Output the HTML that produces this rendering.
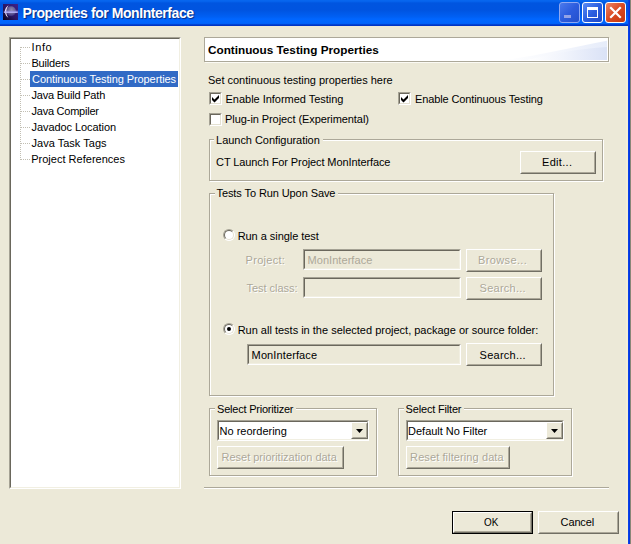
<!DOCTYPE html>
<html>
<head>
<meta charset="utf-8">
<title>Properties for MonInterface</title>
<style>
html,body{margin:0;padding:0;}
body{width:631px;height:544px;overflow:hidden;background:#ECE9D8;position:relative;
 font-family:"Liberation Sans",sans-serif;font-size:11px;color:#000;}
.a{position:absolute;}
.t{position:absolute;white-space:nowrap;line-height:14px;height:14px;}
.dis{color:#ACA899;}
.dl{color:#ACA899;text-shadow:1px 1px 0 #fff;}
.gl{background:#ECE9D8;box-shadow:-2px 0 0 #ECE9D8,3px 0 0 #ECE9D8;}
/* title bar */
#tbar{left:0;top:0;width:631px;height:26px;
 background:linear-gradient(to bottom,#0868F0 0px,#0562EC 1.5px,#0055E0 3px,#0054E0 10px,#0060F4 17px,#0066FF 19px,#0064FC 23.4px,#0048D8 24.3px,#0034C4 25.2px,#0034C4 26px);}
#title{top:4px;font-size:14px;font-weight:bold;color:#fff;line-height:18px;height:18px;
 text-shadow:1px 1px 1px #0A2A80;}
#rborder{left:628px;top:0;width:2px;height:544px;background:linear-gradient(to right,#0A44EC,#0032DC);box-shadow:1px 0 0 #8A8678;}
#rlight{left:626px;top:26px;width:2px;height:518px;background:#F2EDD9;}
/* sunken boxes */
.sunk{background:#fff;border:1px solid;border-color:#A5A294 #fff #fff #A5A294;box-sizing:border-box;}
.sunk:before{content:"";position:absolute;left:0;top:0;right:0;bottom:0;border:1px solid;border-color:#6A675C #F1EFE2 #F1EFE2 #6A675C;}
.fld{background:#ECE9D8;}
/* group boxes (etched) */
.grp{box-sizing:border-box;border:1px solid #ACA899;box-shadow:1px 1px 0 #fff,inset 1px 1px 0 #fff;}
/* buttons */
.btn{box-sizing:border-box;border:1px solid;border-color:#fff #716F64 #716F64 #fff;background:#ECE9D8;}
.btn:before{content:"";position:absolute;left:0;top:0;right:0;bottom:0;border:1px solid;border-color:#ECE9D8 #ACA899 #ACA899 #ECE9D8;}
/* check / radio */
.chk{width:13px;height:13px;box-sizing:border-box;background:#fff;border:1px solid;border-color:#A5A294 #fff #fff #A5A294;}
.chk:before{content:"";position:absolute;left:0;top:0;right:0;bottom:0;border:1px solid;border-color:#6A675C #E4E1D2 #E4E1D2 #6A675C;}
.rad{width:12px;height:12px;box-sizing:border-box;border-radius:50%;background:#fff;border:1px solid;border-color:#A5A294 #fff #fff #A5A294;}
.rad:before{content:"";position:absolute;left:0;top:0;right:0;bottom:0;border-radius:50%;border:1px solid;border-color:#6A675C #E4E1D2 #E4E1D2 #6A675C;}
.dot{width:4px;height:4px;border-radius:50%;background:#000;left:3px;top:3px;}
.tl{border-top:1px dotted #C2BFB3;height:0;width:9px !important;}
</style>
</head>
<body>
<!-- TITLE BAR -->
<div id="tbar" class="a"></div>
<div id="rlight" class="a"></div>
<div id="rborder" class="a"></div>
<svg class="a" style="left:3px;top:4px" width="15" height="16" viewBox="0 0 15 16">
 <defs><linearGradient id="ig" x1="1" y1="0" x2="0" y2="1"><stop offset="0" stop-color="#40228A"/><stop offset="0.55" stop-color="#2A1664"/><stop offset="1" stop-color="#06031C"/></linearGradient>
 <radialGradient id="gb" cx="0.55" cy="0.35" r="0.65"><stop offset="0" stop-color="#8E8AAE"/><stop offset="0.6" stop-color="#625A94"/><stop offset="1" stop-color="#34267A"/></radialGradient></defs>
 <rect x="0" y="0" width="15" height="16" fill="url(#ig)"/>
 <circle cx="8" cy="7.3" r="5" fill="url(#gb)"/>
 <path d="M5.6 1.6 C2.6 3 1.2 6.5 2.4 10 C3 11.8 4 13 5.4 13.8 C4 12 3.2 10 3.3 7.6 C3.4 5.2 4.2 3.2 5.6 1.6Z" fill="#F6EEFA"/>
 <rect x="0.8" y="6.8" width="14" height="0.9" fill="#A8A4F4"/>
 <rect x="0.8" y="8.0" width="14" height="0.9" fill="#B8B4FA"/>
</svg>
<!-- caption buttons -->
<div class="a" style="left:559px;top:2px;width:21px;height:21px;box-sizing:border-box;border:1px solid #8FA8F2;border-radius:3px;background:linear-gradient(135deg,#4C7AEC,#2C5CDE 50%,#2450CC)"></div>
<div class="a" style="left:564px;top:15px;width:7px;height:3px;background:#93A2E6"></div>
<div class="a" style="left:582px;top:2px;width:21px;height:21px;box-sizing:border-box;border:1px solid #fff;border-radius:3px;background:linear-gradient(135deg,#5C8CF5,#2C5FE0 50%,#1E48C8)"></div>
<div class="a" style="left:587px;top:7px;width:11px;height:11px;box-sizing:border-box;border:1px solid #fff;border-top:3px solid #fff"></div>
<div class="a" style="left:605px;top:2px;width:21px;height:21px;box-sizing:border-box;border:1px solid #fff;border-radius:3px;background:linear-gradient(135deg,#EC8668,#DA4A22 50%,#C4380E)"></div>
<svg class="a" style="left:605px;top:2px" width="21" height="21"><path d="M6 6 L15 15 M15 6 L6 15" stroke="#fff" stroke-width="2.2" stroke-linecap="square"/></svg>

<!-- TREE -->
<div class="a sunk" style="left:9px;top:37px;width:172px;height:452px"></div>
<div class="a" style="left:20px;top:47px;width:0;height:113px;border-left:1px dotted #C2BFB3"></div>
<div class="a tl" style="left:21px;top:47px;width:8px"></div>
<div class="a tl" style="left:21px;top:63px;width:8px"></div>
<div class="a tl" style="left:21px;top:79px;width:8px"></div>
<div class="a tl" style="left:21px;top:95px;width:8px"></div>
<div class="a tl" style="left:21px;top:111px;width:8px"></div>
<div class="a tl" style="left:21px;top:127px;width:8px"></div>
<div class="a tl" style="left:21px;top:143px;width:8px"></div>
<div class="a tl" style="left:21px;top:159px;width:8px"></div>
<div class="a" style="left:30px;top:71px;width:148px;height:16px;background:#316AC5"></div>

<!-- HEADER -->
<div class="a" style="left:204px;top:37px;width:405px;height:25px;box-sizing:border-box;border:1px solid #ACA899;background:#fff;box-shadow:1px 1px 0 #FBFAF4"></div>
<svg class="a" style="left:205px;top:38px" width="402" height="22" viewBox="0 0 402 22">
 <defs>
  <linearGradient id="h1" x1="300" y1="0" x2="402" y2="0" gradientUnits="userSpaceOnUse"><stop offset="0" stop-color="#FFFFFF"/><stop offset="0.45" stop-color="#F6F8FD"/><stop offset="1" stop-color="#E6ECFA"/></linearGradient>
  <linearGradient id="h2" x1="322" y1="0" x2="402" y2="0" gradientUnits="userSpaceOnUse"><stop offset="0" stop-color="#FFFFFF"/><stop offset="0.45" stop-color="#F1F4FC"/><stop offset="1" stop-color="#DAE2F6"/></linearGradient>
 </defs>
 <path d="M300 22 C335 17 370 9 402 2.7 L402 22Z" fill="url(#h1)"/>
 <path d="M322 22 C350 15 375 10.5 402 9 L402 22Z" fill="url(#h2)"/>
</svg>

<div class="a chk" style="left:209px;top:92px"></div>
<svg class="a" style="left:209px;top:92px" width="13" height="13"><path d="M3 5 L5.5 7.5 L10 3 L10 6 L5.5 10.5 L3 8Z" fill="#000"/></svg>
<div class="a chk" style="left:398px;top:92px"></div>
<svg class="a" style="left:398px;top:92px" width="13" height="13"><path d="M3 5 L5.5 7.5 L10 3 L10 6 L5.5 10.5 L3 8Z" fill="#000"/></svg>
<div class="a chk" style="left:209px;top:113px"></div>

<!-- Launch Configuration -->
<div class="a grp" style="left:209px;top:139px;width:394px;height:42px"></div>
<div class="a btn" style="left:520px;top:151px;width:76px;height:23px"></div>

<!-- Tests To Run Upon Save -->
<div class="a grp" style="left:209px;top:193px;width:345px;height:203px"></div>
<div class="a rad" style="left:223px;top:229px"></div>
<div class="a sunk fld" style="left:303px;top:249px;width:158px;height:21px"></div>
<div class="a btn" style="left:466px;top:249px;width:76px;height:23px"></div>
<div class="a sunk fld" style="left:303px;top:277px;width:158px;height:21px"></div>
<div class="a btn" style="left:466px;top:277px;width:76px;height:23px"></div>
<div class="a rad" style="left:223px;top:323px"><div class="a dot"></div></div>
<div class="a sunk fld" style="left:247px;top:344px;width:214px;height:21px"></div>
<div class="a btn" style="left:466px;top:343px;width:76px;height:23px"></div>

<!-- Select Prioritizer -->
<div class="a grp" style="left:209px;top:408px;width:168px;height:68px"></div>
<div class="a sunk" style="left:217px;top:420px;width:152px;height:21px"></div>
<div class="a btn" style="left:351px;top:422px;width:17px;height:17px"></div>
<svg class="a" style="left:356px;top:429px" width="7" height="4"><path d="M0 0H7L3.5 4Z" fill="#000"/></svg>
<div class="a btn" style="left:217px;top:446px;width:127px;height:23px"></div>

<!-- Select Filter -->
<div class="a grp" style="left:398px;top:408px;width:174px;height:68px"></div>
<div class="a sunk" style="left:406px;top:420px;width:158px;height:21px"></div>
<div class="a btn" style="left:546px;top:422px;width:17px;height:17px"></div>
<svg class="a" style="left:551px;top:429px" width="7" height="4"><path d="M0 0H7L3.5 4Z" fill="#000"/></svg>
<div class="a btn" style="left:406px;top:446px;width:104px;height:23px"></div>

<!-- separator -->
<div class="a" style="left:204px;top:487px;width:405px;height:1px;background:#ACA899"></div>
<div class="a" style="left:204px;top:488px;width:405px;height:1px;background:#fff"></div>

<!-- OK / Cancel -->
<div class="a" style="left:452px;top:511px;width:81px;height:23px;box-sizing:border-box;border:1px solid #000"></div>
<div class="a btn" style="left:453px;top:512px;width:79px;height:21px"></div>
<div class="a btn" style="left:538px;top:511px;width:81px;height:23px"></div>

<div id="title" class="t" style="left:22.60px;letter-spacing:-0.437px;">Properties for MonInterface</div>
<div id="tr1" class="t" style="left:31.60px;letter-spacing:0.600px;top:40px;">Info</div>
<div id="tr2" class="t" style="left:31.40px;letter-spacing:-0.180px;top:56px;">Builders</div>
<div id="tr3" class="t" style="left:32.04px;letter-spacing:-0.090px;top:72px;color:#fff">Continuous Testing Properties</div>
<div id="tr4" class="t" style="left:31.54px;letter-spacing:-0.193px;top:88px;">Java Build Path</div>
<div id="tr5" class="t" style="left:31.54px;letter-spacing:-0.242px;top:104px;">Java Compiler</div>
<div id="tr6" class="t" style="left:31.54px;letter-spacing:-0.072px;top:120px;">Javadoc Location</div>
<div id="tr7" class="t" style="left:31.54px;letter-spacing:0.015px;top:136px;">Java Task Tags</div>
<div id="tr8" class="t" style="left:31.14px;letter-spacing:0.020px;top:152px;">Project References</div>
<div id="hd" class="t" style="left:208.00px;letter-spacing:0.000px;top:43px;font-weight:bold;transform:scaleX(1.068);transform-origin:0 0">Continuous Testing Properties</div>
<div id="set" class="t" style="left:208.02px;letter-spacing:-0.016px;top:73px;">Set continuous testing properties here</div>
<div id="c1" class="t" style="left:225.56px;letter-spacing:-0.023px;top:92px;">Enable Informed Testing</div>
<div id="c2" class="t" style="left:415.00px;letter-spacing:-0.116px;top:92px;">Enable Continuous Testing</div>
<div id="c3" class="t" style="left:225.10px;letter-spacing:-0.079px;top:112px;">Plug-in Project (Experimental)</div>
<div id="g1" class="t gl" style="left:216.12px;letter-spacing:-0.048px;top:133px;">Launch Configuration</div>
<div id="ct" class="t" style="left:216.04px;letter-spacing:-0.099px;top:155px;">CT Launch For Project MonInterface</div>
<div id="g2" class="t gl" style="left:216.52px;letter-spacing:-0.093px;top:186px;">Tests To Run Upon Save</div>
<div id="r1" class="t" style="left:237.64px;letter-spacing:-0.044px;top:229px;">Run a single test</div>
<div id="pl" class="t dl" style="left:245.60px;letter-spacing:0.283px;top:253px;">Project:</div>
<div id="pm" class="t dis" style="left:307.56px;letter-spacing:0.050px;top:253px;">MonInterface</div>
<div id="tl" class="t dl" style="left:246.50px;letter-spacing:-0.036px;top:281px;">Test class:</div>
<div id="r2" class="t" style="left:237.64px;letter-spacing:-0.002px;top:323px;">Run all tests in the selected project, package or source folder:</div>
<div id="mi" class="t" style="left:251.62px;letter-spacing:0.114px;top:348px;">MonInterface</div>
<div id="g3" class="t gl" style="left:217.02px;letter-spacing:-0.212px;top:402px;">Select Prioritizer</div>
<div id="nr" class="t" style="left:219.58px;letter-spacing:0.000px;top:424px;">No reordering</div>
<div id="g4" class="t gl" style="left:405.60px;letter-spacing:-0.180px;top:402px;">Select Filter</div>
<div id="df" class="t" style="left:408.08px;letter-spacing:-0.023px;top:424px;">Default No Filter</div>
<div id="bE" class="t" style="left:542.06px;letter-spacing:0.300px;top:155px;">Edit...</div>
<div id="bB" class="t dl" style="left:478.12px;letter-spacing:0.361px;top:253px;">Browse...</div>
<div id="bS1" class="t dl" style="left:479.60px;letter-spacing:0.248px;top:281px;">Search...</div>
<div id="bS2" class="t" style="left:479.60px;letter-spacing:0.248px;top:348px;">Search...</div>
<div id="bRp" class="t dl" style="left:221.56px;letter-spacing:-0.014px;top:450px;">Reset prioritization data</div>
<div id="bRf" class="t dl" style="left:410.12px;letter-spacing:0.094px;top:450px;">Reset filtering data</div>
<div id="bOK" class="t" style="left:484.00px;letter-spacing:0.000px;top:515px;transform:scaleX(0.9);transform-origin:0 0">OK</div>
<div id="bCa" class="t" style="left:560.62px;letter-spacing:-0.144px;top:515px;">Cancel</div>
</body>
</html>
